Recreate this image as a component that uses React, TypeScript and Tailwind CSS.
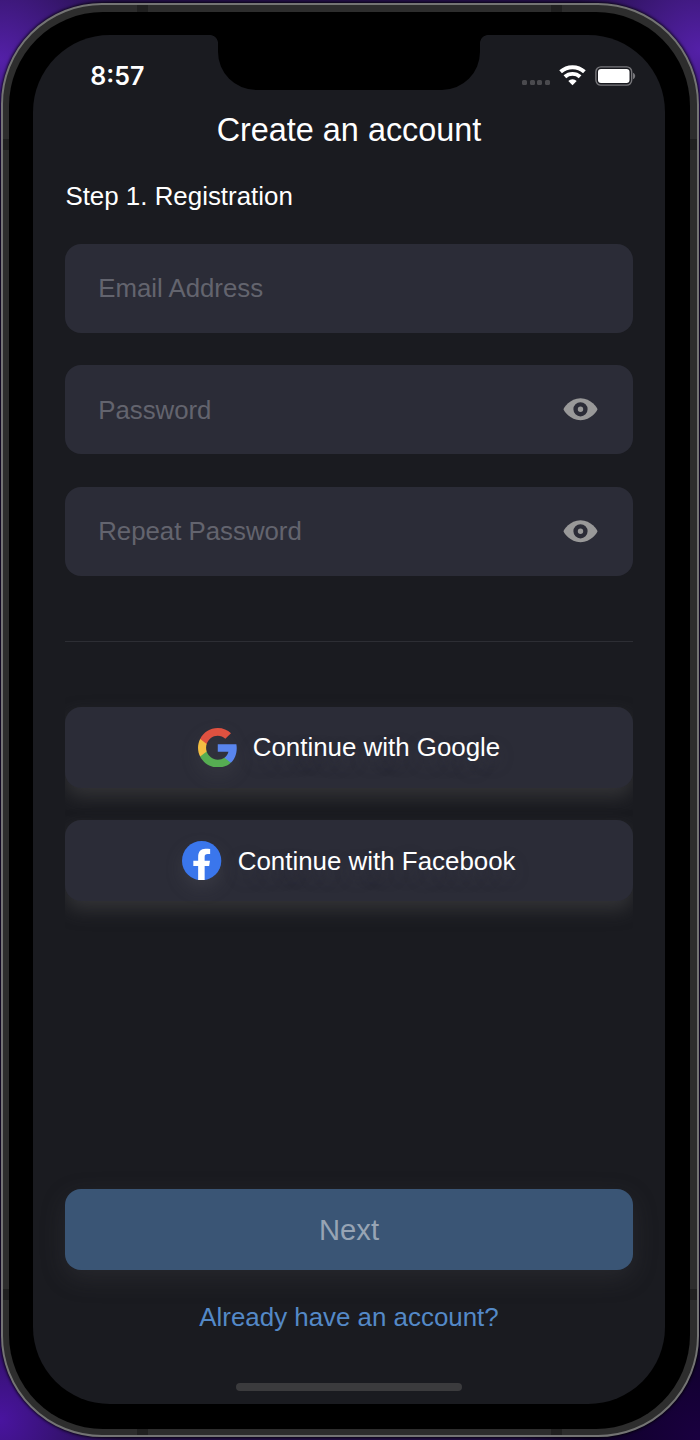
import React from "react";

const sans = "font-['Liberation_Sans',Arial,sans-serif]";

function Eye() {
  return (
    <svg width="35" height="23" viewBox="0 0 35 23" fill="none">
      <path
        d="M.5 11.300C.5 10 7 .3 17.500.3s17 9.700 17 11-6.500 11-17 11S.5 12.600.5 11.300Z"
        fill="#999999"
      />
      <circle cx="17.500" cy="11.300" r="4.900" stroke="#2b2c37" strokeWidth="4.400" />
    </svg>
  );
}

function Wifi() {
  return (
    <svg width="27" height="21" viewBox="0 0 27 21" fill="none" stroke="#fff">
      <path d="M1.600 6.800A17.700 17.700 0 0 1 25.400 6.800" strokeWidth="4" />
      <path d="M5.900 11.800A11.200 11.200 0 0 1 21.100 11.800" strokeWidth="3.900" />
      <path d="M13.500 20.300 9.300 16A6 6 0 0 1 17.700 16Z" fill="#fff" stroke="none" />
    </svg>
  );
}

function Battery() {
  return (
    <svg width="41" height="20" viewBox="0 0 41 20" fill="none">
      <rect x=".9" y=".9" width="35.800" height="18.200" rx="5" stroke="#77777b" strokeWidth="1.400" />
      <rect x="3" y="3" width="31.500" height="14" rx="3" fill="#fff" />
      <path d="M38 6.800c1.300.5 2.200 1.800 2.200 3.200s-.9 2.700-2.200 3.200Z" fill="#77777b" />
    </svg>
  );
}

function GoogleLogo() {
  return (
    <svg className="drop-shadow-[0_8px_8px_rgba(90,90,100,0.25)]" width="39" height="39.500" viewBox="1 1 21.700 22">
      <path fill="#5985ee" d="M22.560 12.250c0-.78-.07-1.530-.2-2.250H12v4.260h5.920c-.26 1.370-1.040 2.530-2.210 3.310v2.770h3.570c2.080-1.920 3.280-4.740 3.280-8.090z" />
      <path fill="#56ad52" d="M12 23c2.970 0 5.460-.98 7.280-2.660l-3.570-2.770c-.98.66-2.230 1.060-3.710 1.060-2.860 0-5.290-1.930-6.160-4.530H2.180v2.840C3.990 20.530 7.700 23 12 23z" />
      <path fill="#f3be42" d="M5.840 14.090c-.22-.66-.35-1.360-.35-2.090s.13-1.430.35-2.090V7.070H2.180C1.430 8.550 1 10.220 1 12s.43 3.450 1.180 4.930l3.660-2.840z" />
      <path fill="#df5140" d="M12 5.380c1.620 0 3.060.56 4.210 1.640l3.150-3.150C17.450 2.090 14.970 1 12 1 7.700 1 3.990 3.470 2.180 7.070l3.660 2.840c.87-2.600 3.300-4.530 6.160-4.530z" />
    </svg>
  );
}

function FacebookLogo() {
  return (
    <svg className="drop-shadow-[0_8px_8px_rgba(90,90,100,0.25)]" width="39.300" height="39.300" viewBox="0 0 118 118">
      <circle cx="59" cy="59" r="59" fill="#3a76ec" />
      <path
        fill="#fff"
        d="M48.500 117.500V75H34V59h14.500V47c0-15 8-24 22-24 5 0 10 .4 14 1v15h-7c-7 0-9.500 3-9.500 8v12h16l-2.500 16H68v42.500Z"
      />
    </svg>
  );
}

function Field({ placeholder, secret }: { placeholder: string; secret?: boolean }) {
  return (
    <div className="flex h-[89px] items-center justify-between rounded-2xl bg-[#2b2c37] pr-[35px] pl-[32.800px]">
      <span className="text-[25.800px] leading-8 text-[#63646e]">{placeholder}</span>
      {secret && <Eye />}
    </div>
  );
}

function SocialButton({ icon, label }: { icon: React.ReactNode; label: string }) {
  return (
    <button className="flex h-[81px] w-full shrink-0 items-center justify-center gap-4 rounded-2xl bg-[#2b2c37] text-[25.9px] leading-8 text-white shadow-[0_9px_18px_rgba(66,66,68,0.6)] [text-shadow:0_8px_16px_rgba(80,80,92,0.35)]">
      {icon}
      <span>{label}</span>
    </button>
  );
}

function Notch() {
  return (
    <div className="absolute top-0 left-[177px] flex items-start">
      <div className="size-2 bg-[radial-gradient(circle_at_0_100%,transparent_7.500px,#000_8.200px)]" />
      <div className="h-[54.500px] w-[262px] rounded-b-[38px] bg-black" />
      <div className="size-2 bg-[radial-gradient(circle_at_100%_100%,transparent_7.500px,#000_8.200px)]" />
    </div>
  );
}

function AntennaBands() {
  const band = "absolute bg-[#202020]";
  return (
    <>
      <div className={`${band} top-0 left-[134px] h-[7px] w-[11px]`} />
      <div className={`${band} top-0 right-[135px] h-[7px] w-[11px]`} />
      <div className={`${band} bottom-0 left-[134px] h-[7px] w-[11px]`} />
      <div className={`${band} bottom-0 right-[135px] h-[7px] w-[11px]`} />
      <div className={`${band} top-[134px] left-0 h-[11px] w-[6px]`} />
      <div className={`${band} top-[134px] right-0 h-[11px] w-[7px]`} />
      <div className={`${band} bottom-[135px] left-0 h-[11px] w-[6px]`} />
      <div className={`${band} bottom-[135px] right-0 h-[11px] w-[7px]`} />
    </>
  );
}

export default function App() {
  return (
    <div
      className={`${sans} h-[1440px] w-[700px] overflow-hidden bg-[#25104a] bg-[radial-gradient(circle_at_0_60px,#5420a8,transparent_130px),radial-gradient(circle_at_700px_50px,#5420a8,transparent_130px),radial-gradient(circle_at_0_1420px,#49149f,transparent_120px),radial-gradient(circle_at_700px_1440px,#1a0040,#0e0028_110px,transparent_180px)] pt-[3px] pl-px`}
    >
      <div className="h-[1434px] w-[697.500px] rounded-[101px] border-2 border-[#747474] bg-[#2d2d2d] shadow-[0_0_3px_1px_rgba(0,0,0,0.8)]">
        <div className="relative h-full w-full overflow-hidden rounded-[99px] pt-[6.500px] pl-[6px]">
          <AntennaBands />
          <div className="relative h-[1417px] w-[681px] rounded-[94px] bg-black pt-[23.500px] pl-6">
            <main className="relative flex h-[1369px] w-[632px] flex-col overflow-hidden rounded-[77px] bg-[#1a1b20] px-[32.400px]">
              <Notch />
              <header className="flex h-[72px] shrink-0 items-start justify-between pt-[25px] pl-[24.800px]">
                <time className="font-['Inter',sans-serif] text-[25px] leading-[32px] font-semibold text-white">8:57</time>
                <div className="-mr-[3px] flex items-center gap-[9px] pt-[5px]">
                  <div className="flex gap-[2.500px] pt-[13px]">
                    {[0, 1, 2, 3].map((dot) => (
                      <i key={dot} className="size-[5px] rounded-[1.500px] bg-[#4a4a4e]" />
                    ))}
                  </div>
                  <Wifi />
                  <Battery />
                </div>
              </header>
              <h1 className="h-[46px] text-center text-[32.400px] leading-[46px] text-white">Create an account</h1>
              <p className="mt-[27px] text-[25.900px] leading-8 text-white">Step 1. Registration</p>
              <form className="mt-[31.600px] flex flex-col gap-[32.600px]">
                <Field placeholder="Email Address" />
                <Field placeholder="Password" secret />
                <Field placeholder="Repeat Password" secret />
              </form>
              <hr className="mt-[65px] border-[#2d2e34]" />
              <div className="mt-[65px] flex h-[220px] shrink-0 flex-col gap-[32.500px] overflow-x-clip">
                <SocialButton icon={<GoogleLogo />} label="Continue with Google" />
                <SocialButton icon={<FacebookLogo />} label="Continue with Facebook" />
              </div>
              <div className="grow" />
              <button className="h-[81px] shrink-0 rounded-2xl bg-[#3a5575] pt-0.5 text-[29.200px] text-[#97a4b4] shadow-[0_8px_24px_rgba(70,70,75,0.3)]">
                Next
              </button>
              <a className="mt-[31px] text-center text-[25.900px] leading-8 text-[#5489c7]">Already have an account?</a>
              <div className="mt-[50px] mb-[13px] h-2 w-[226px] shrink-0 self-center rounded-full bg-[#3b3b3d]" />
            </main>
          </div>
        </div>
      </div>
    </div>
  );
}
